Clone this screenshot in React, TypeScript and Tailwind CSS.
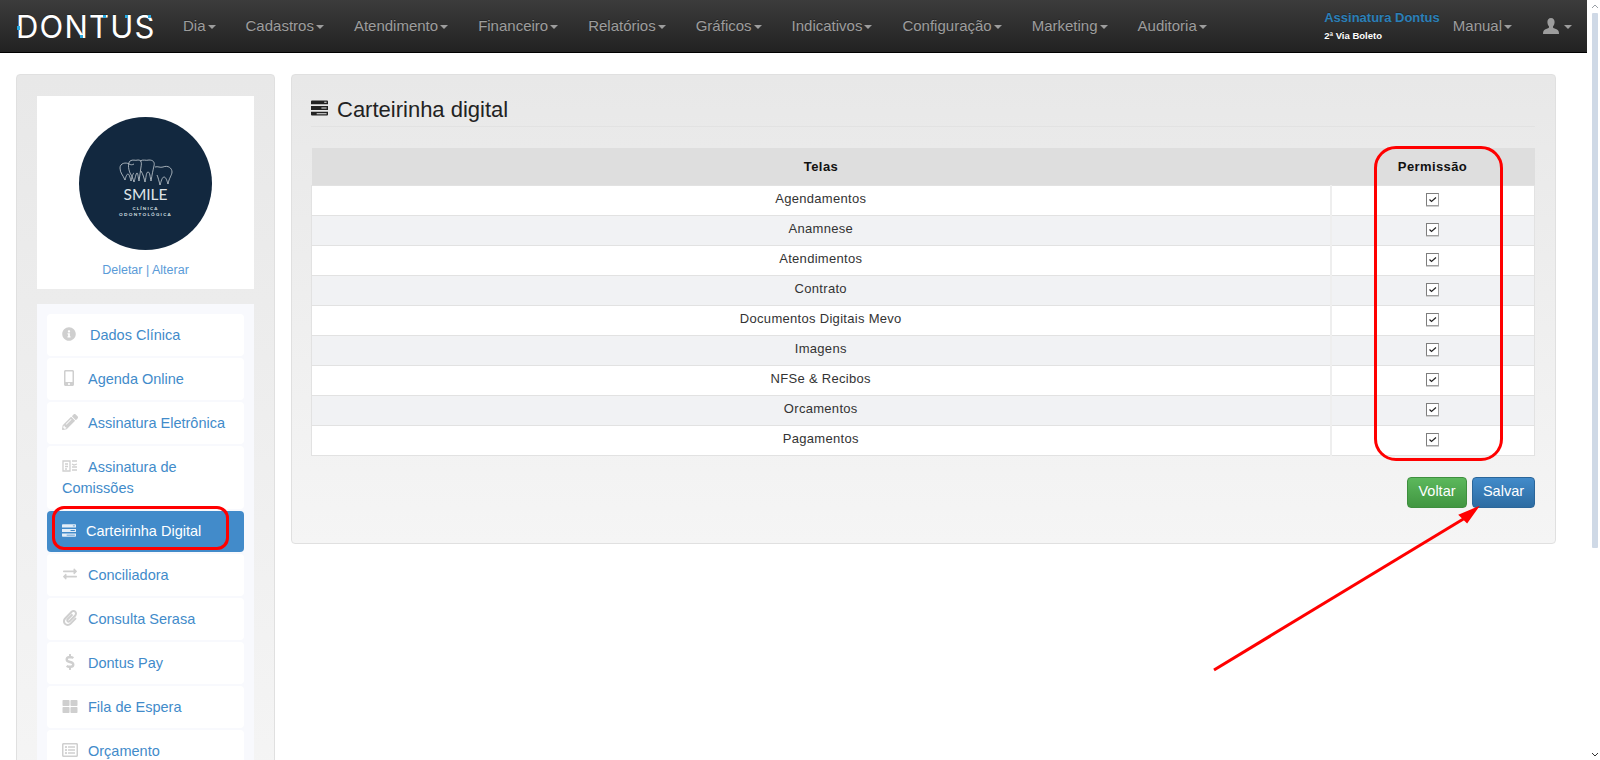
import React from 'react';
import {
  FaDollarSign,
  FaExchangeAlt,
  FaInfoCircle,
  FaMobileAlt,
  FaPaperclip,
  FaPencilAlt,
  FaRegListAlt,
  FaThLarge,
} from 'react-icons/fa';

const NAV_ITEMS = ['Dia', 'Cadastros', 'Atendimento', 'Financeiro', 'Relatórios', 'Gráficos', 'Indicativos', 'Configuração', 'Marketing', 'Auditoria'];
const SCREENS = ['Agendamentos', 'Anamnese', 'Atendimentos', 'Contrato', 'Documentos Digitais Mevo', 'Imagens', 'NFSe & Recibos', 'Orcamentos', 'Pagamentos'];

function Caret() {
  return <span className="ml-[2px] inline-block h-0 w-0 border-x-[4px] border-t-[4px] border-x-transparent border-t-[#9d9d9d] align-middle" />;
}

function CommissionIcon({ className }: { className?: string }) {
  return (
    <svg viewBox="0 0 16 14" className={className} fill="none" stroke="currentColor" strokeWidth="1.3">
      <path d="M1 2h7v10H1z" />
      <path d="M3 5h3M3 7.5h3M3 10h2" />
      <path d="M10 2h5M10 5l2 1 3-1M10 8h5M10 11h5" />
    </svg>
  );
}

// three stacked bars with a notch, used for Carteirinha
function BarsIcon({ className }: { className?: string }) {
  return (
    <svg viewBox="0 0 18 16" className={className} fill="currentColor">
      <path fillRule="evenodd" d="M0 1q0-1 1-1h16q1 0 1 1v3H0zM14 1.5h2.5v1H14z" />
      <path fillRule="evenodd" d="M0 6h18v4H0zM11 7.5h5.5v1H11z" />
      <path fillRule="evenodd" d="M0 12h18v3q0 1-1 1H1q-1 0-1-1zM6 13.5h10.5v1H6z" />
    </svg>
  );
}

function UserIcon({ className }: { className?: string }) {
  return (
    <svg viewBox="0 0 16 16" className={className} fill="currentColor">
      <path d="M8 0c2.4 0 3.6 1.8 3.6 4 0 1.800-.7 3.300-1.500 4.200-.3.900 0 1.600.9 2 1.600.7 3.700 1.300 4.500 2.800.3.700.5 1.800.5 3H0c0-1.200.2-2.300.5-3 .8-1.500 2.900-2.100 4.500-2.800.9-.4 1.200-1.100.9-2C5.100 7.300 4.400 5.800 4.400 4 4.400 1.800 5.600 0 8 0z" />
    </svg>
  );
}

function Logo() {
  return (
    <div className="relative ml-4 w-[137px] font-['Inter',sans-serif] text-[31px] font-normal leading-none tracking-[1.2px] text-white">
      DONTUS
      <span className="absolute left-[1px] top-[15px] h-[4px] w-[3px] bg-[#29a9e0]" />
      <span className="absolute left-[64px] top-[24px] h-[3px] w-[3px] bg-[#29a9e0]" />
      <span className="absolute left-[87px] top-[4px] h-[3px] w-[3px] bg-[#29a9e0]" />
      <span className="absolute left-[109px] top-[4px] h-[3px] w-[3px] bg-[#29a9e0]" />
      <span className="absolute left-[132px] top-[4px] h-[3px] w-[3px] bg-[#29a9e0]" />
    </div>
  );
}

function Navbar() {
  return (
    <nav className="flex h-[53px] items-center border-b border-black bg-gradient-to-b from-[#3c3c3c] to-[#222222] font-['Liberation_Sans',sans-serif] text-[15px] text-[#9d9d9d] [text-shadow:0_-1px_0_rgba(0,0,0,0.25)]">
      <Logo />
      <ul className="ml-[15px] flex items-center">
        {NAV_ITEMS.map((item) => (
          <li key={item} className="px-[15px]">
            {item}
            <Caret />
          </li>
        ))}
      </ul>
      <div className="ml-auto mr-[15px] flex items-center">
        <div className="-mt-[1px] mr-[13px] font-bold">
          <div className="text-[13px] leading-[16px] text-[#2a7fb8]">Assinatura Dontus</div>
          <div className="mt-[4px] text-[9.5px] leading-[12px] text-white">2ª Via Boleto</div>
        </div>
        <span>
          Manual
          <Caret />
        </span>
        <span className="ml-[31px] flex items-center">
          <UserIcon className="h-[16px] w-[16px]" />
          <span className="ml-[3px]">
            <Caret />
          </span>
        </span>
      </div>
    </nav>
  );
}

function ClinicLogo() {
  return (
    <div className="mx-auto flex h-[133px] w-[133px] flex-col items-center justify-center rounded-full bg-[#12283f] pt-[9px] text-[#dfe4e8]">
      <svg viewBox="0 0 54 26" className="h-[26px] w-[54px]" fill="none" stroke="#c9d0d6" strokeWidth="0.8">
        <path d="M1 9c0-5 6-6 9-4 2 1 3 1 5 0M1 9c0 5 3 7 5 12 1-4 2-6 3-6s2 3 3 7c1-4 2-8 3-8" />
        <path d="M11 14c-2-5-2-10 0-12 3-2 5 0 8-1 3 0 4 2 3 7l-2 14c-1-4-1-8-2-8s-2 6-3 9c-1-3-2-6-4-9z" />
        <path d="M21 2c3-2 6 0 9-1 4 0 6 2 5 6-1 4-2 9-3 15-1-4-1-9-3-9s-2 7-3 10c-1-4-2-8-4-11" />
        <path d="M36 8c3-1 5 1 8 0 5-2 9 1 9 5 0 3-3 6-4 12-1-3-2-7-4-7s-3 5-4 8c-1-4-2-8-3-10" />
      </svg>
      <div className="mt-[1px] font-['Lato',sans-serif] text-[15.5px] leading-[17px]">SMILE</div>
      <div className="mt-[3px] font-['Lato',sans-serif] text-[4.5px] font-bold leading-[6px] tracking-[1.2px]">CLÍNICA</div>
      <div className="font-['Lato',sans-serif] text-[4.5px] font-bold leading-[6px] tracking-[1.35px]">ODONTOLÓGICA</div>
    </div>
  );
}

const MENU = [
  { label: 'Dados Clínica', icon: <FaInfoCircle className="inline-block h-[14px] w-[14px] align-[-1px]" />, gap: 'ml-[14px]' },
  { label: 'Agenda Online', icon: <FaMobileAlt className="inline-block h-[16px] w-[14px] align-[-2px]" />, gap: 'ml-[12px]' },
  { label: 'Assinatura Eletrônica', icon: <FaPencilAlt className="inline-block h-[16px] w-[16px] align-[-2px]" />, gap: 'ml-[10px]' },
  { label: 'Assinatura de Comissões', icon: <CommissionIcon className="inline-block h-[14px] w-[16px] align-[-1px]" />, gap: 'ml-[10px]' },
  { label: 'Carteirinha Digital', icon: <BarsIcon className="inline-block h-[13px] w-[14px] align-[-1px]" />, gap: 'ml-[10px]', active: true },
  { label: 'Conciliadora', icon: <FaExchangeAlt className="inline-block h-[14px] w-[16px] align-[-1px]" />, gap: 'ml-[10px]' },
  { label: 'Consulta Serasa', icon: <FaPaperclip className="inline-block h-[16px] w-[16px] align-[-2px]" />, gap: 'ml-[10px]' },
  { label: 'Dontus Pay', icon: <FaDollarSign className="inline-block h-[16px] w-[16px] align-[-2px]" />, gap: 'ml-[10px]' },
  { label: 'Fila de Espera', icon: <FaThLarge className="inline-block h-[15px] w-[16px] align-[-2px]" />, gap: 'ml-[10px]' },
  { label: 'Orçamento', icon: <FaRegListAlt className="inline-block h-[16px] w-[16px] align-[-2px]" />, gap: 'ml-[10px]' },
];

function Sidebar() {
  return (
    <aside className="w-[259px] shrink-0 rounded-[4px] border border-[#e0e0e0] bg-gradient-to-b from-[#e8e8e8] to-[#f5f5f5] px-5 pt-[21px] pb-5">
      <div className="h-[193px] bg-white pt-[21px] text-center">
        <ClinicLogo />
        <div className="mt-[12px] text-[12.5px] leading-[16px] text-[#5a9bd8]">Deletar | Alterar</div>
      </div>
      <ul className="mt-[15px] bg-[#f8f9fd] p-[10px] text-[14.5px]">
        {MENU.map((item) => (
          <li
            key={item.label}
            className={`mt-[2px] rounded-[4px] px-[15px] leading-[21px] first:mt-0 ${
              item.active ? 'bg-[#428bca] py-[10px] text-white' : 'bg-white py-[10.5px] text-[#428bca]'
            }`}
          >
            <span className={item.active ? 'text-[#e4eef7]' : 'text-[#cfcfcf]'}>{item.icon}</span>
            <span className={item.gap}>{item.label}</span>
          </li>
        ))}
      </ul>
    </aside>
  );
}

function Check() {
  return (
    <span className="mx-auto block h-[13px] w-[13px] border border-[#7d7d7d] border-b-[#a0a0a0] border-r-[#a0a0a0] bg-white shadow-[0_1px_0_#cfcfcf]">
      <svg viewBox="0 0 11 11" className="h-[11px] w-[11px]" fill="none" stroke="#222222" strokeWidth="1.2">
        <path d="M2.5 5.500l2 2 4.500-4" />
      </svg>
    </span>
  );
}

function PermissionsPanel() {
  return (
    <main className="h-[470px] w-[1265px] shrink-0 rounded-[4px] border border-[#e0e0e0] bg-gradient-to-b from-[#e8e8e8] to-[#f5f5f5] pl-[19px] pr-5 pt-5">
      <h3 className="flex h-[32px] items-start border-b border-[#e2e2e2] pt-[2px] text-[22px] leading-[26px] text-[#222222]">
        <BarsIcon className="mr-[9px] mt-[3px] h-[16px] w-[17px]" />
        Carteirinha digital
      </h3>
      <table className="mt-[21px] w-full table-fixed border-collapse text-[13px] tracking-[0.3px] text-[#333333]">
        <thead>
          <tr className="h-[37px] bg-[#dedede] font-bold tracking-[0.4px] text-[#111111]">
            <th>Telas</th>
            <th className="w-[204px]">Permissão</th>
          </tr>
        </thead>
        <tbody>
          {SCREENS.map((screen) => (
            <tr key={screen} className="h-[30px] border border-[#e2e2e2] bg-white even:bg-[#f1f2f4]">
              <td className="pb-[3px] text-center">{screen}</td>
              <td className="border-l-2 border-[#eeeeee] pb-[1px]">
                <Check />
              </td>
            </tr>
          ))}
        </tbody>
      </table>
      <div className="mt-[21px] flex justify-end gap-[5px] text-[14.5px] text-white [text-shadow:0_-1px_0_rgba(0,0,0,0.2)]">
        <button className="h-[31px] w-[60px] rounded-[4px] border border-[#3e8f3e] bg-gradient-to-b from-[#5cb85c] to-[#419641]">Voltar</button>
        <button className="h-[31px] w-[63px] rounded-[4px] border border-[#2b669a] bg-gradient-to-b from-[#428bca] to-[#2d6ca2]">Salvar</button>
      </div>
    </main>
  );
}

function Scrollbar() {
  return (
    <div className="flex h-full w-[13px] shrink-0 flex-col items-center bg-white pl-[2px] text-[#9aa0a6]">
      <svg viewBox="0 0 8 5" className="mt-[4px] h-[5px] w-[8px]" fill="none" stroke="currentColor">
        <path d="M1 4l3-3 3 3" />
      </svg>
      <div className="mt-[4px] h-[535px] w-[6px] rounded-[1px] bg-[#cfd9e6]" />
      <svg viewBox="0 0 8 5" className="mb-[3px] mt-auto h-[5px] w-[8px]" fill="none" stroke="#333333">
        <path d="M1 1l3 3 3-3" />
      </svg>
    </div>
  );
}

export default function App() {
  return (
    <div className="flex h-screen overflow-hidden bg-white font-['Liberation_Sans',sans-serif]">
      <div className="relative min-w-0 flex-1">
        <Navbar />
        <div className="flex items-start gap-4 pl-4 pt-[21px]">
          <Sidebar />
          <PermissionsPanel />
        </div>

        {/* Red annotations over the page */}
        <div className="absolute left-[52px] top-[506px] h-[44px] w-[177px] rounded-[12px] border-[3px] border-[#ff0000]" />
        <div className="absolute left-[1374px] top-[146px] h-[315px] w-[129px] rounded-[22px] border-[3px] border-[#ff0000]" />
        <svg className="absolute left-[1200px] top-[500px] h-[180px] w-[290px]" viewBox="0 0 290 180" fill="none">
          <path d="M14 170L265 18" stroke="#ff0000" strokeWidth="3" />
          <path d="M277 8L260 15L267 22Z" fill="#ff0000" stroke="#ff0000" strokeWidth="2" />
        </svg>
      </div>
      <Scrollbar />
    </div>
  );
}
